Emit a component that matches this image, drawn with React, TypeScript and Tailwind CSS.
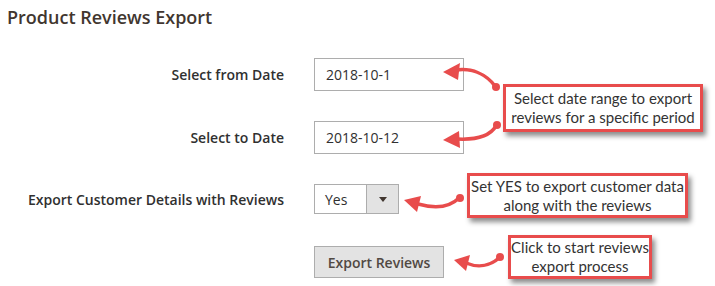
const RED = "#e84c4c";

function Arrows() {
    return (
        <svg className="absolute left-0 top-0 pointer-events-none" width={715} height={286} viewBox="0 0 715 286">
            <g fill="none" stroke={RED} strokeWidth={3.5} strokeLinecap="round">
                <path d="M456 70 C472 68 486 74 495 86" />
                <path d="M496 126 C490 136 476 140 457 139" />
                <path d="M459 198 C450 207 436 209 418 204" />
                <path d="M499 258 C490 266 478 268 466 263" />
            </g>
            <g fill={RED}>
                <polygon points="443,72 460,63 458,80" />
                <circle cx={496} cy={87} r={4} />
                <polygon points="443,140 459,131 460,148" />
                <circle cx={497} cy={125} r={4} />
                <polygon points="404,200 421,196 417,212" />
                <circle cx={460} cy={198} r={4} />
                <polygon points="454,260 470,255 466,271" />
                <circle cx={500} cy={257} r={4} />
            </g>
        </svg>
    );
}

function Callout({ className, lines }: { className: string; lines: string[] }) {
    return (
        <div
            className={`absolute flex flex-col items-center justify-center bg-white border-[3px] border-[#e84c4c] shadow-[3px_4px_5px_rgba(0,0,0,0.45)] text-[15px] leading-[19px] text-[#333333] font-['Lato',sans-serif] ${className}`}
        >
            {lines.map((l) => (
                <span key={l} className="whitespace-nowrap">{l}</span>
            ))}
        </div>
    );
}

export default function App() {
    return (
        <div className="relative w-[715px] h-[286px] bg-white overflow-hidden font-['Open_Sans',sans-serif] text-[#303030]">
            <div className="h-[40px] pl-[7px] pt-[5px] text-[18px] leading-[24px] font-semibold text-[#41362f]">
                Product Reviews Export
            </div>

            <div className="flex flex-col gap-[30px] pt-[18px]">
                <div className="flex items-center gap-[30px] h-[33px]">
                    <label className="w-[284px] text-right text-[14px] font-semibold text-[#303030]">Select from Date</label>
                    <div className="w-[150px] h-[33px] border border-[#adadad] flex items-center pl-[11px] text-[14px] text-[#303030]">
                        2018-10-1
                    </div>
                </div>
                <div className="flex items-center gap-[30px] h-[33px]">
                    <label className="w-[284px] text-right text-[14px] font-semibold text-[#303030]">Select to Date</label>
                    <div className="w-[150px] h-[33px] border border-[#adadad] flex items-center pl-[11px] text-[14px] text-[#303030]">
                        2018-10-12
                    </div>
                </div>
                <div className="flex items-center gap-[30px] h-[30px]">
                    <label className="w-[284px] text-right text-[14px] font-semibold text-[#303030]">Export Customer Details with Reviews</label>
                    <div className="w-[85px] h-[30px] border border-[#adadad] flex text-[14px]">
                        <div className="flex-1 flex items-center pl-[10px]">Yes</div>
                        <div className="w-[32px] bg-[#e3e3e3] border-l border-[#adadad] flex items-center justify-center">
                            <span className="w-0 h-0 border-l-[4px] border-r-[4px] border-t-[5px] border-l-transparent border-r-transparent border-t-[#41362f]" />
                        </div>
                    </div>
                </div>
                <div className="flex items-center gap-[30px] h-[32px] mt-[2px]">
                    <div className="w-[284px]" />
                    <button className="w-[130px] h-[32px] bg-[#e3e3e3] border border-[#adadad] text-[14px] font-semibold text-[#514943]">
                        Export Reviews
                    </button>
                </div>
            </div>

            <Arrows />

            <Callout
                className="left-[503px] top-[84px] w-[200px] h-[48px]"
                lines={["Select date range to export", "reviews for a specific period"]}
            />
            <Callout
                className="left-[467px] top-[173px] w-[221px] h-[45px]"
                lines={["Set YES to export customer data", "along with the reviews"]}
            />
            <Callout
                className="left-[508px] top-[235px] w-[144px] h-[44px]"
                lines={["Click to start reviews", "export process"]}
            />
        </div>
    );
}
